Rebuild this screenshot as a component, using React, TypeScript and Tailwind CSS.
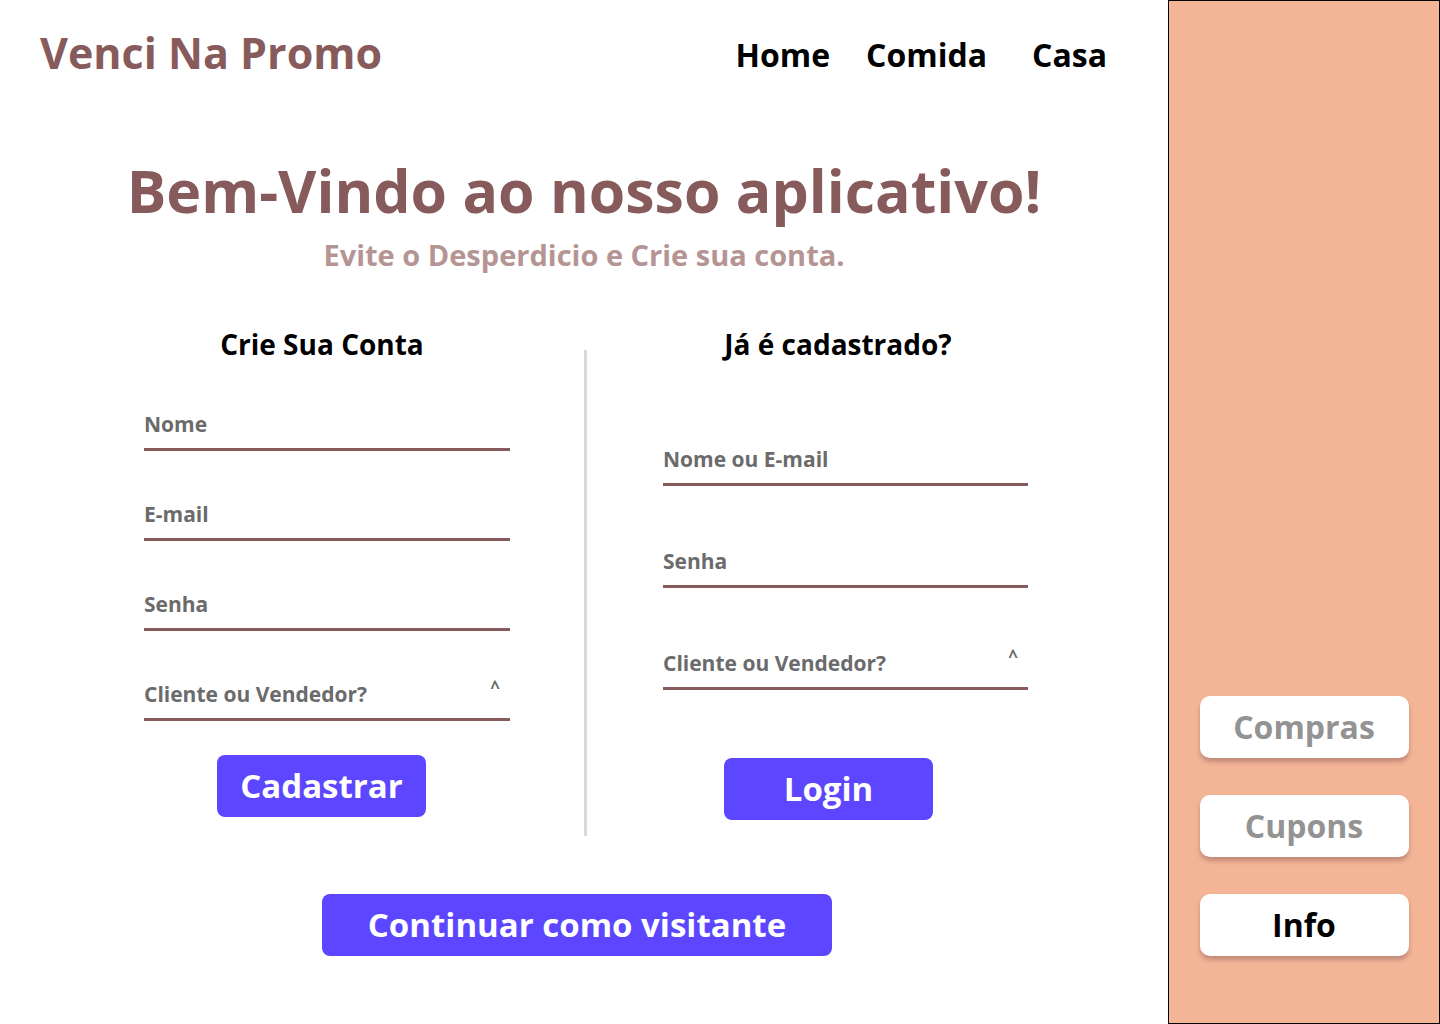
import React from 'react';

const brown = 'text-[#875B5B]';

function Field({ label, select = false, className = '' }: { label: string; select?: boolean; className?: string }) {
  return (
    <div className={`flex items-end justify-between border-b-[3px] border-[#875B5B] pb-[14px] ${className}`}>
      <span className="text-[21px] leading-[20px] font-bold text-[#6B6B6B]">{label}</span>
      {select ? <span className="relative -top-[6px] mr-[10px] text-[17px] leading-[20px] font-bold text-[#6B6B6B]">^</span> : null}
    </div>
  );
}

function SideButton({ label, active = false }: { label: string; active?: boolean }) {
  return (
    <button
      className={`flex h-[62px] w-[209px] items-center justify-center rounded-[10px] bg-white text-[32px] font-bold shadow-[0_4px_4px_rgba(135,91,91,0.45)] ${active ? 'text-black' : 'text-[#939393]'}`}
    >
      {label}
    </button>
  );
}

export default function App() {
  return (
    <div className="flex h-[1024px] w-[1440px] overflow-hidden bg-white font-['Open_Sans',_'Liberation_Sans',_sans-serif]">
      <main className="w-[1168px]">
        <header className="flex items-start pt-[28px]">
          <h2 className={`ml-[40px] text-[43px] leading-[50px] font-bold ${brown}`}>Venci Na Promo</h2>
          <nav className="ml-auto mr-[61px] mt-[7px] flex gap-[36px] text-[32px] leading-[40px] font-bold text-black">
            <a>Home</a>
            <a>Comida</a>
            <a className="ml-[9px]">Casa</a>
          </nav>
        </header>

        <section className="mt-[80px] flex flex-col items-center">
          <h1 className={`text-[59px] leading-[64px] font-bold ${brown}`}>Bem-Vindo ao nosso aplicativo!</h1>
          <p className="mt-[18px] text-[29px] leading-[30px] font-bold text-[#B59593]">Evite o Desperdicio e Crie sua conta.</p>
        </section>

        <section className="mt-[59px] flex pl-[144px]">
          <div className="flex w-[366px] flex-col">
            <h3 className="pr-[10px] text-center text-[28px] leading-[30px] font-bold text-black">Crie Sua Conta</h3>
            <Field label="Nome" className="mt-[55px]" />
            <Field label="E-mail" className="mt-[53px]" />
            <Field label="Senha" className="mt-[53px]" />
            <Field label="Cliente ou Vendedor?" select className="mt-[53px]" />
            <button className="ml-[73px] mt-[34px] h-[62px] w-[209px] rounded-[8px] bg-[#5C46FF] text-[33px] font-bold text-white">
              Cadastrar
            </button>
          </div>

          <div className="ml-[74px] mt-[21px] h-[486px] w-[3px] bg-[#D9D9D9]" />

          <div className="ml-[76px] flex w-[365px] flex-col">
            <h3 className="pr-[15px] text-center text-[28px] leading-[30px] font-bold text-black">Já é cadastrado?</h3>
            <Field label="Nome ou E-mail" className="mt-[90px]" />
            <Field label="Senha" className="mt-[65px]" />
            <Field label="Cliente ou Vendedor?" select className="mt-[65px]" />
            <button className="ml-[61px] mt-[68px] h-[62px] w-[209px] rounded-[8px] bg-[#5C46FF] text-[33px] font-bold text-white">
              Login
            </button>
          </div>
        </section>

        <button className="ml-[322px] mt-[58px] h-[62px] w-[510px] rounded-[8px] bg-[#5C46FF] text-[33px] font-bold text-white">
          Continuar como visitante
        </button>
      </main>

      <aside className="flex w-[272px] flex-col items-center justify-end gap-[37px] border border-black bg-[#F4B496] pb-[67px]">
        <SideButton label="Compras" />
        <SideButton label="Cupons" />
        <SideButton label="Info" active />
      </aside>
    </div>
  );
}
